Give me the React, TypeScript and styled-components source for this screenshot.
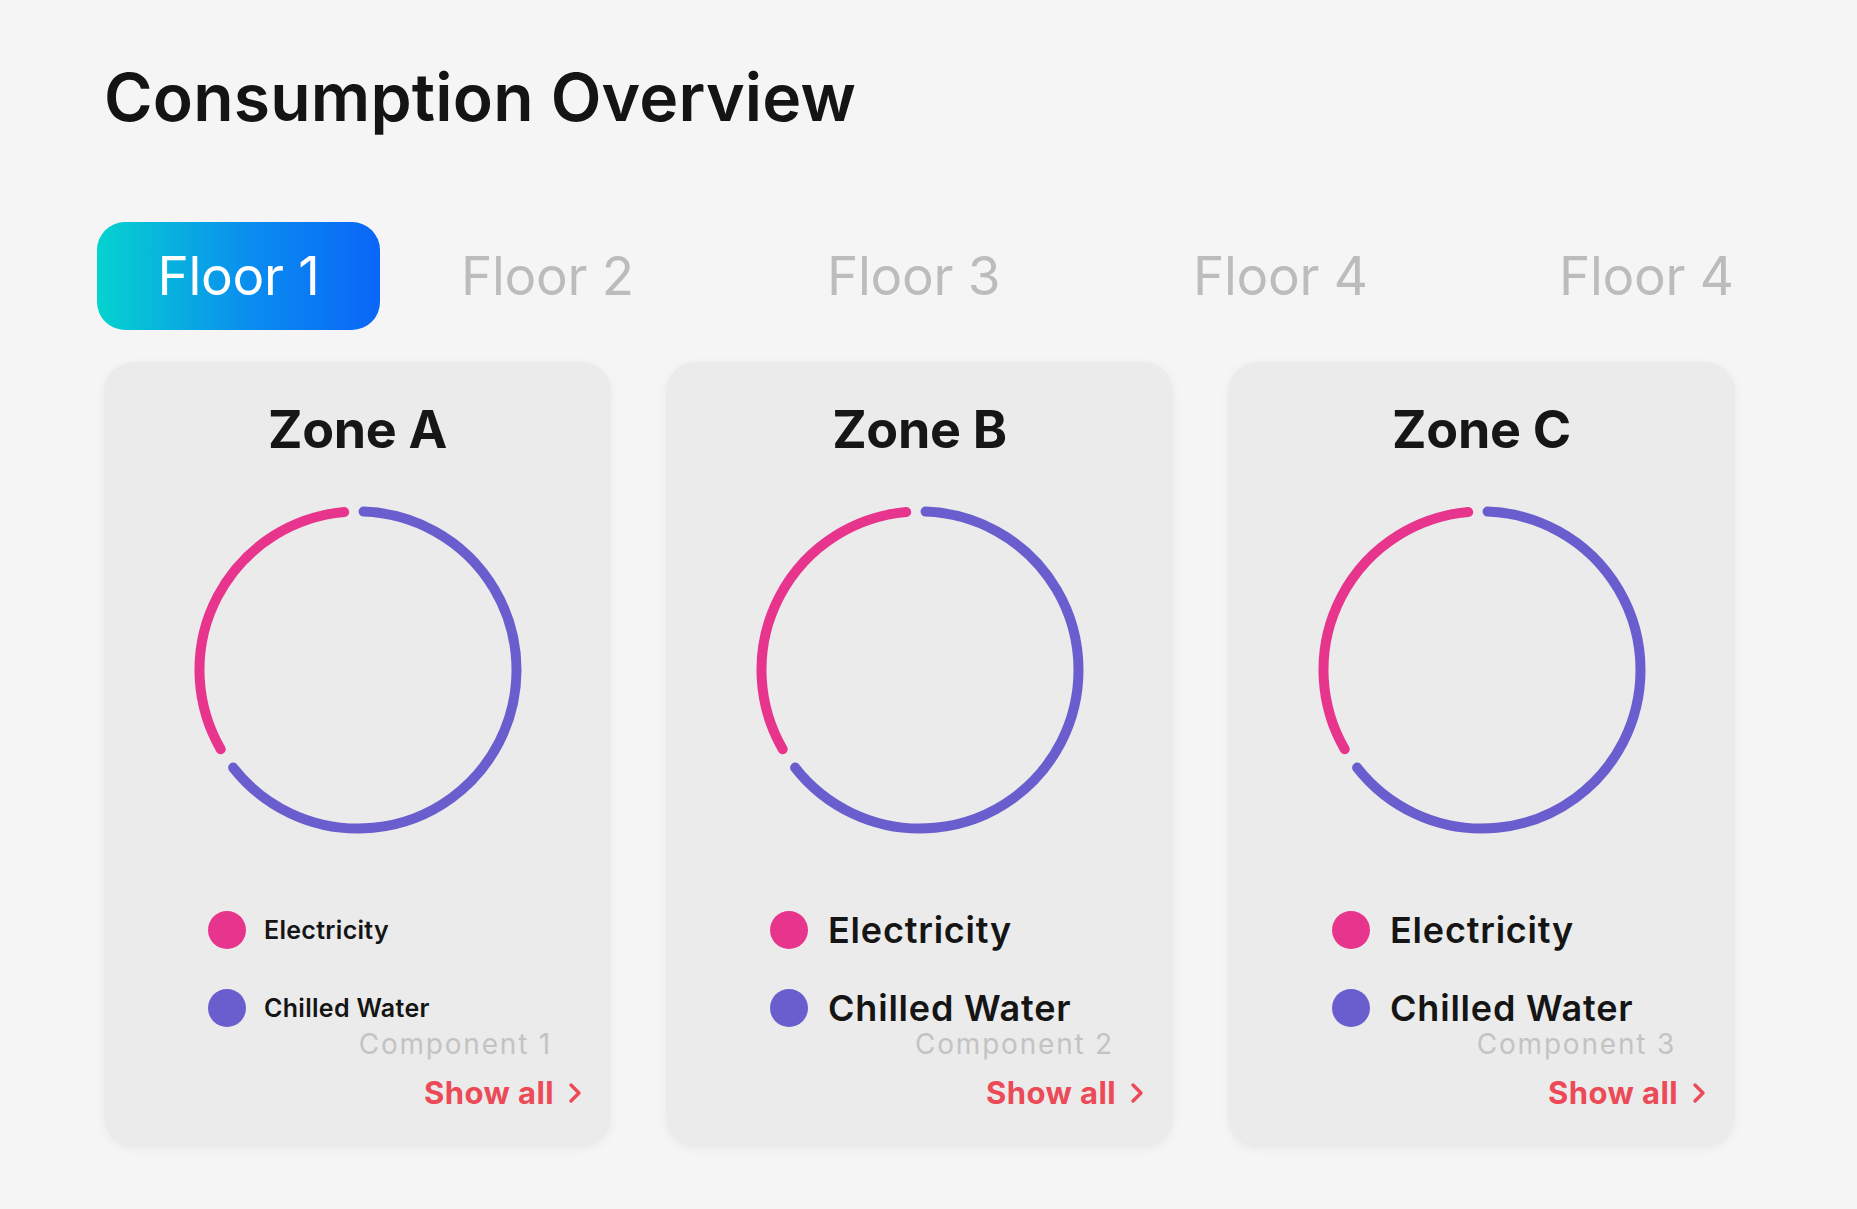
import React from "react";
import styled, { createGlobalStyle } from "styled-components";

const Global = createGlobalStyle`
  html, body { margin: 0; padding: 0; background: #f5f5f5; }
  body { font-family: Inter, "Noto Sans", sans-serif; }
`;

const Page = styled.div`
  width: 1857px;
  height: 1209px;
  box-sizing: border-box;
  padding: 57px 0 0 104px;
  background: #f5f5f5;
  overflow: hidden;
`;

const Title = styled.h1`
  margin: 0;
  font-family: Inter, sans-serif;
  font-weight: 600;
  font-size: 66px;
  line-height: 80px;
  color: #141414;
  letter-spacing: 0.2px;
`;

const Tabs = styled.div`
  display: flex;
  align-items: center;
  margin: 85px 0 0 -7px;
  height: 108px;
`;

const ActiveTab = styled.div`
  flex: none;
  width: 283px;
  height: 108px;
  border-radius: 28px;
  background: linear-gradient(90deg, #05d3cf 0%, #0a8cf0 55%, #0a66f7 100%);
  color: #fff;
  display: flex;
  align-items: center;
  justify-content: center;
  font-family: Inter, sans-serif;
  font-weight: 400;
  font-size: 53px;
  letter-spacing: -0.3px;
  margin-right: 81px;
`;

const Tab = styled.div`
  flex: none;
  width: 366px;
  color: #bcbcbc;
  font-family: Inter, sans-serif;
  font-weight: 400;
  font-size: 53px;
  letter-spacing: -0.3px;
  &:last-child {
    width: auto;
  }
`;

const Cards = styled.div`
  display: flex;
  gap: 55px;
  margin-top: 32px;
`;

const Card = styled.div`
  flex: none;
  width: 507px;
  height: 785px;
  box-sizing: border-box;
  border-radius: 30px;
  background: #ebebeb;
  box-shadow: 0 2px 10px rgba(0, 0, 0, 0.05);
  display: flex;
  flex-direction: column;
  align-items: center;
  padding-top: 37px;
`;

const ZoneTitle = styled.div`
  font-family: Inter, sans-serif;
  font-weight: 700;
  font-size: 52px;
  line-height: 62px;
  color: #161616;
  letter-spacing: -0.3px;
`;

const DonutBox = styled.svg`
  display: block;
  margin-top: 39px;
`;

const Legend = styled.div`
  align-self: stretch;
  display: flex;
  flex-direction: column;
  gap: 38px;
  padding-left: 104px;
  margin-top: 70px;
`;

const LegendRow = styled.div`
  display: flex;
  align-items: center;
  height: 40px;
`;

const Dot = styled.span<{ $color: string }>`
  width: 38px;
  height: 38px;
  border-radius: 50%;
  background: ${(p) => p.$color};
  flex: none;
`;

const LegendLabel = styled.span<{ $compact?: boolean }>`
  margin-left: ${(p) => (p.$compact ? "18px" : "20px")};
  font-family: Inter, sans-serif;
  font-weight: 600;
  font-size: ${(p) => (p.$compact ? "25px" : "36px")};
  letter-spacing: ${(p) => (p.$compact ? "0.3px" : "0.8px")};
  color: #151515;
`;

const Footer = styled.div`
  align-self: stretch;
  display: flex;
  flex-direction: column;
  align-items: flex-end;
  margin-top: -1px;
  padding-right: 29px;
`;

const ComponentName = styled.div`
  font-family: Inter, sans-serif;
  font-weight: 400;
  font-size: 28px;
  line-height: 34px;
  color: #c3c3c3;
  letter-spacing: 1.8px;
  margin-right: 30px;
`;

const ShowAll = styled.a`
  margin-top: 14px;
  display: flex;
  align-items: center;
  gap: 14px;
  font-family: Inter, sans-serif;
  font-weight: 700;
  font-size: 31px;
  line-height: 36px;
  letter-spacing: 0.4px;
  color: #ec4a57;
  text-decoration: none;
  cursor: pointer;
`;

const PINK = "#e7358d";
const PURPLE = "#6a5ecf";

function polar(cx: number, cy: number, r: number, deg: number) {
  const a = (deg * Math.PI) / 180;
  return [cx + r * Math.sin(a), cy - r * Math.cos(a)];
}

function arc(cx: number, cy: number, r: number, from: number, to: number) {
  const [x1, y1] = polar(cx, cy, r, from);
  const [x2, y2] = polar(cx, cy, r, to);
  const large = to - from > 180 ? 1 : 0;
  return `M ${x1} ${y1} A ${r} ${r} 0 ${large} 1 ${x2} ${y2}`;
}

function Donut() {
  const size = 340;
  const c = size / 2;
  const r = 158.5;
  return (
    <DonutBox width={size} height={size} viewBox={`0 0 ${size} ${size}`}>
      <path d={arc(c, c, r, 240, 355)} fill="none" stroke={PINK} strokeWidth={10} strokeLinecap="round" />
      <path d={arc(c, c, r, 2, 232)} fill="none" stroke={PURPLE} strokeWidth={10} strokeLinecap="round" />
    </DonutBox>
  );
}

const Chevron = () => (
  <svg width="14" height="22" viewBox="0 0 14 22">
    <polyline points="3,3 11,11 3,19" fill="none" stroke="#ec4a57" strokeWidth="3.4" strokeLinecap="round" strokeLinejoin="round" />
  </svg>
);

const zones = [
  { name: "Zone A", comp: "Component 1", compact: true },
  { name: "Zone B", comp: "Component 2", compact: false },
  { name: "Zone C", comp: "Component 3", compact: false },
];

export default function App() {
  return (
    <Page>
      <Global />
      <Title>Consumption Overview</Title>
      <Tabs>
        <ActiveTab>Floor 1</ActiveTab>
        <Tab>Floor 2</Tab>
        <Tab>Floor 3</Tab>
        <Tab>Floor 4</Tab>
        <Tab>Floor 4</Tab>
      </Tabs>
      <Cards>
        {zones.map((z) => (
          <Card key={z.name}>
            <ZoneTitle>{z.name}</ZoneTitle>
            <Donut />
            <Legend>
              <LegendRow>
                <Dot $color={PINK} />
                <LegendLabel $compact={z.compact}>Electricity</LegendLabel>
              </LegendRow>
              <LegendRow>
                <Dot $color={PURPLE} />
                <LegendLabel $compact={z.compact}>Chilled Water</LegendLabel>
              </LegendRow>
            </Legend>
            <Footer>
              <ComponentName>{z.comp}</ComponentName>
              <ShowAll>
                Show all <Chevron />
              </ShowAll>
            </Footer>
          </Card>
        ))}
      </Cards>
    </Page>
  );
}
